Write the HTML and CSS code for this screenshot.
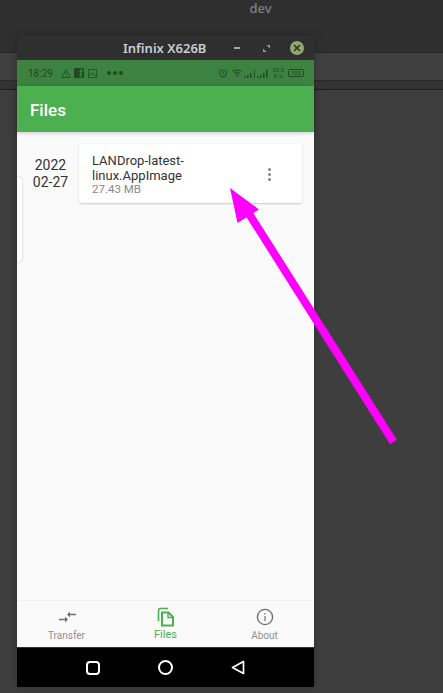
FILE: index.html
```html
<!DOCTYPE html>
<html lang="en">
<head>
  <meta charset="UTF-8">
  <title>Infinix X626B</title>
  <link rel="stylesheet" href="styles.css">
</head>
<body>
  <div class="desktop">
    <div class="desk-title">dev</div>
    <div class="desk-bar"></div>
    <div class="desk-strip"></div>

    <div class="window">
      <div class="titlebar">
        <span class="win-title">Infinix X626B</span>
        <span class="win-min"></span>
        <svg class="win-max" width="7" height="7" viewBox="0 0 8 8"><path d="M8 0H4L8 4ZM0 8H4L0 4Z" fill="#9a9a9a"/></svg>
        <span class="win-close">
          <svg width="8" height="8" viewBox="0 0 8 8"><path d="M1 1L7 7M7 1L1 7" stroke="#2f2f2f" stroke-width="1.6"/></svg>
        </span>
      </div>

      <div class="phone">
        <div class="statusbar">
          <span class="clock">18:29</span>
          <svg class="st-icon" width="10" height="9" viewBox="0 0 10 9"><path d="M5 .8L9.400 8.500H.6Z M5 3.500V6 M5 6.800V7.600" fill="none" stroke="#1f4a22" stroke-width=".8"/></svg>
          <span class="fb">f</span>
          <svg class="st-icon" width="9" height="9" viewBox="0 0 9 9"><path d="M.5.5H8.500V8.500H.5Z M.5 7L3.500 4L8.500 7" fill="none" stroke="#1f4a22" stroke-width=".8"/></svg>
          <span class="dots"><i></i><i></i><i></i></span>
          <span class="st-right">
            <svg width="10" height="10" viewBox="0 0 10 10"><circle cx="5" cy="5.500" r="3.500" fill="none" stroke="#1f4a22" stroke-width=".9"/><path d="M5 3.500V5.700L6.300 6.500M.5 2L2 .8M9.500 2L8 .8" fill="none" stroke="#1f4a22" stroke-width=".8"/></svg>
            <svg width="10" height="9" viewBox="0 0 10 9"><path d="M.5 2.200Q5-.6 9.500 2.200M2 4Q5 2.200 8 4M3.400 5.800Q5 4.800 6.600 5.800" fill="none" stroke="#1f4a22"/><path d="M4 7H6L5 8.600Z" fill="#1f4a22"/></svg>
            <svg class="signal" width="11" height="9" viewBox="0 0 11 9"><path d="M0 7.500H1.500V9H0ZM3 6H4.500V9H3ZM6 4H7.500V9H6ZM10 .5H10.800V9H10Z" fill="#1f4a22"/></svg>
            <svg class="signal" width="11" height="9" viewBox="0 0 11 9"><path d="M0 7.500H1.500V9H0ZM3 6H4.500V9H3ZM6 4H7.500V9H6ZM9 .5H10.500V9H9Z" fill="#1f4a22"/></svg>
            <span class="speed">28.5<br>K/s</span>
            <span class="battery">100</span>
          </span>
        </div>

        <div class="appbar">Files</div>

        <div class="content">
          <div class="prev-card"></div>
          <div class="date">2022<br>02-27</div>
          <div class="file-card">
            <div class="file-info">
              <div class="file-name">LANDrop-latest-<br>linux.AppImage</div>
              <div class="file-size">27.43 MB</div>
            </div>
            <div class="more"><i></i><i></i><i></i></div>
          </div>
        </div>

        <div class="tabs">
          <div class="tab">
            <svg width="20" height="20" viewBox="0 0 20 20"><path d="M2 12.500H9M12.500 7.500H19" stroke="#6f6f6f" stroke-width="1.600" fill="none"/><path d="M8 9.500L11 12.500L8 15.500ZM13 4.500L10 7.500L13 10.500Z" fill="#6f6f6f"/></svg>
            <span>Transfer</span>
          </div>
          <div class="tab active">
            <svg width="20" height="20" viewBox="0 0 20 20"><path d="M2.500 14V3.500Q2.500 1.500 4.500 1.500H12" fill="none" stroke="#4caf50" stroke-width="1.600"/><path d="M6 5.500H12.500L17 10V18.500H6Z" fill="none" stroke="#4caf50" stroke-width="2"/><path d="M12 5.500V10.500H17" fill="none" stroke="#4caf50" stroke-width="1.400"/></svg>
            <span>Files</span>
          </div>
          <div class="tab">
            <svg width="20" height="20" viewBox="0 0 20 20"><circle cx="10" cy="10" r="7.600" fill="none" stroke="#6f6f6f" stroke-width="1.400"/><path d="M10 9V14M10 6V7.600" stroke="#6f6f6f" stroke-width="1.200"/></svg>
            <span>About</span>
          </div>
        </div>

        <div class="navbar">
          <span class="nav-square"></span>
          <span class="nav-circle"></span>
          <svg width="14" height="15" viewBox="0 0 14 15"><path d="M12.500 1.500V13.500L1.500 7.500Z" fill="none" stroke="#fff" stroke-width="1.700" stroke-linejoin="round"/></svg>
        </div>
      </div>
    </div>

    <svg class="arrow" width="443" height="693" viewBox="0 0 443 693"><path d="M393.500 442L246 209" stroke="#ff00ff" stroke-width="8" fill="none"/><path d="M230 188L259 209.500L237.500 223Z" fill="#ff00ff"/></svg>
  </div>
</body>
</html>
```

FILE: styles.css
```css
* {
  margin: 0;
  padding: 0;
  box-sizing: border-box;
}

body {
  font-family: 'Roboto', sans-serif;
  background: #3e3e3e;
}

.desktop {
  position: relative;
  width: 443px;
  height: 693px;
  overflow: hidden;
  background: #3e3e3e;
}

.desk-title {
  height: 53px;
  background: #2f2f2f;
  color: #7d8288;
  font-family: 'Noto Sans', sans-serif;
  font-size: 13px;
  font-weight: 500;
  text-align: center;
  padding-left: 78px;
  line-height: 16px;
  border-bottom: 1px solid #262626;
}

.desk-bar {
  height: 28px;
  background: #404040;
  border-bottom: 1px solid #2a2a2a;
}

.desk-strip {
  height: 9px;
  background: #343434;
  border-bottom: 1px solid #1e1e1e;
}

.window {
  position: absolute;
  left: 17px;
  top: 36px;
  width: 297px;
  height: 651px;
  display: flex;
  flex-direction: column;
  background: #2f2f2f;
  border-radius: 4px 4px 0 0;
  box-shadow: 0 0 8px rgba(0, 0, 0, 0.25);
}

.titlebar {
  height: 24px;
  flex: none;
  position: relative;
  display: flex;
  align-items: center;
  color: #c9ced3;
  font-family: 'Noto Sans', sans-serif;
  font-size: 13px;
  font-weight: 600;
}

.win-title {
  margin-left: 106px;
}

.win-min {
  position: absolute;
  left: 217px;
  top: 11px;
  width: 6px;
  height: 2px;
  background: #a8a8a8;
}

.win-max {
  position: absolute;
  left: 246px;
  top: 9px;
}

.win-close {
  position: absolute;
  left: 273px;
  top: 5px;
  width: 14px;
  height: 14px;
  border-radius: 50%;
  background: #94a86e;
  display: flex;
  align-items: center;
  justify-content: center;
}

.phone {
  flex: 1;
  display: flex;
  flex-direction: column;
  min-height: 0;
  background: #fafafa;
}

.statusbar {
  height: 26px;
  flex: none;
  background: #3d8241;
  display: flex;
  align-items: center;
  padding: 0 10px 0 11px;
  color: #1f4a22;
  font-size: 10px;
}

.clock {
  margin-right: 8px;
}

.st-icon {
  margin-right: 3px;
}

.fb {
  width: 10px;
  height: 10px;
  margin-right: 4px;
  background: #1f4a22;
  color: #3d8241;
  font-size: 11px;
  font-weight: 700;
  line-height: 11px;
  text-align: right;
  padding-right: 1px;
}

.dots {
  display: flex;
  gap: 2px;
  margin-left: 7px;
}

.dots i {
  width: 4px;
  height: 4px;
  border-radius: 50%;
  background: #1f4a22;
}

.st-right {
  margin-left: auto;
  display: flex;
  align-items: center;
  gap: 4px;
}

.signal {
  margin-left: -2px;
}

.speed {
  font-size: 6px;
  line-height: 6px;
  text-align: center;
}

.battery {
  width: 16px;
  height: 8px;
  border: 1px solid #1f4a22;
  border-radius: 2px;
  font-size: 6px;
  line-height: 6px;
  text-align: center;
}

.appbar {
  height: 46px;
  flex: none;
  background: #4caf50;
  color: #fff;
  font-size: 17px;
  font-weight: 500;
  line-height: 48px;
  padding-left: 13px;
  box-shadow: 0 1px 4px rgba(0, 0, 0, 0.2);
  position: relative;
}

.content {
  flex: 1;
  position: relative;
  overflow: hidden;
  display: flex;
  align-items: flex-start;
  padding: 12px 12px 0 0;
}

.prev-card {
  position: absolute;
  left: -8px;
  top: 45px;
  width: 13px;
  height: 85px;
  background: #fff;
  border-radius: 4px;
  box-shadow: 0 0 2px rgba(0, 0, 0, 0.3);
}

.date {
  width: 62px;
  flex: none;
  padding-top: 13px;
  padding-left: 5px;
  text-align: center;
  font-size: 14px;
  line-height: 17px;
  color: #333;
}

.file-card {
  flex: 1;
  height: 59px;
  background: #fff;
  border-radius: 3px;
  box-shadow: 0 1px 2px rgba(0, 0, 0, 0.2);
  display: flex;
  align-items: center;
  justify-content: space-between;
  padding: 2px 31px 0 13px;
}

.file-name {
  font-size: 13px;
  line-height: 15px;
  color: #333;
}

.file-size {
  font-size: 11.5px;
  line-height: 13px;
  color: #888;
}

.more {
  display: flex;
  flex-direction: column;
  gap: 2px;
}

.more i {
  width: 3px;
  height: 3px;
  border-radius: 50%;
  background: #858585;
}

.tabs {
  height: 47px;
  flex: none;
  display: flex;
  background: #fafafa;
  border-top: 1px solid #f2f2f2;
}

.tab {
  flex: 1;
  display: flex;
  flex-direction: column;
  align-items: center;
  padding-top: 6px;
  font-size: 10px;
  color: #8f8f8f;
}

.tab svg {
  margin-bottom: 3px;
}

.tab.active {
  color: #4caf50;
  font-size: 11px;
}

.tab.active svg {
  margin-bottom: 2px;
}

.tab span {
  line-height: 12px;
}

.navbar {
  height: 40px;
  flex: none;
  background: #000;
  border-top: 1px solid #333;
  display: flex;
  align-items: center;
  justify-content: center;
  gap: 58px;
}

.nav-square {
  width: 14px;
  height: 14px;
  border: 2px solid #fff;
  border-radius: 4px;
}

.nav-circle {
  width: 15px;
  height: 15px;
  border: 2px solid #fff;
  border-radius: 50%;
}

.arrow {
  position: absolute;
  left: 0;
  top: 0;
}
```
